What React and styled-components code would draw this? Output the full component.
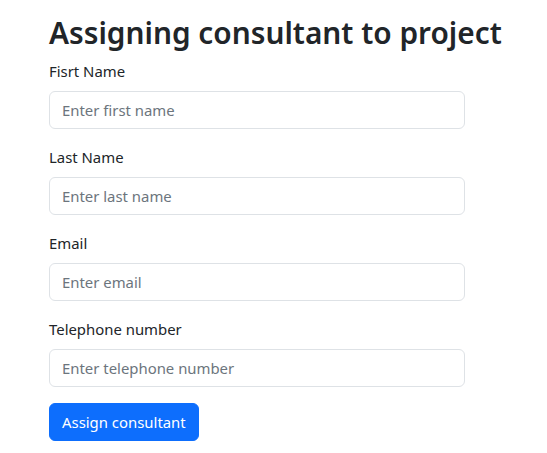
import React from "react";
import styled, { createGlobalStyle } from "styled-components";

const GlobalStyle = createGlobalStyle`
  * { box-sizing: border-box; }
  body {
    margin: 0;
    background: #fff;
    color: #212529;
    font-family: "Noto Sans", "Open Sans", sans-serif;
    font-size: 14.9px;
    line-height: 24px;
  }
`;

const Page = styled.div`
  padding: 15px 0 0 49px;
`;

const Title = styled.h1`
  margin: 0 0 8px;
  font-size: 29.8px;
  font-weight: 600;
  line-height: 36px;
  white-space: nowrap;
`;

const Form = styled.form`
  width: 416px;
`;

const Field = styled.div`
  margin-bottom: 16px;
`;

const Label = styled.label`
  display: inline-block;
  margin-bottom: 8px;
`;

const Input = styled.input`
  display: block;
  width: 100%;
  height: 38px;
  padding: 6px 12px;
  font: inherit;
  color: #212529;
  background: #fff;
  border: 1px solid #dee2e6;
  border-radius: 6px;

  &::placeholder {
    color: #6c757d;
  }
`;

const Button = styled.button`
  display: inline-block;
  height: 38px;
  padding: 6px 12px;
  font: inherit;
  color: #fff;
  background: #0d6efd;
  border: 1px solid #0d6efd;
  border-radius: 6px;
  cursor: pointer;
`;

const fields = [
  { id: "firstName", label: "Fisrt Name", placeholder: "Enter first name" },
  { id: "lastName", label: "Last Name", placeholder: "Enter last name" },
  { id: "email", label: "Email", placeholder: "Enter email" },
  { id: "phone", label: "Telephone number", placeholder: "Enter telephone number" }
];

const App = () => (
  <Page>
    <GlobalStyle />
    <Title>Assigning consultant to project</Title>
    <Form onSubmit={e => e.preventDefault()}>
      {fields.map(field =>
        <Field key={field.id}>
          <Label htmlFor={field.id}>{field.label}</Label>
          <Input id={field.id} type="text" placeholder={field.placeholder} />
        </Field>
      )}
      <Button type="submit">Assign consultant</Button>
    </Form>
  </Page>
);

export default App;
